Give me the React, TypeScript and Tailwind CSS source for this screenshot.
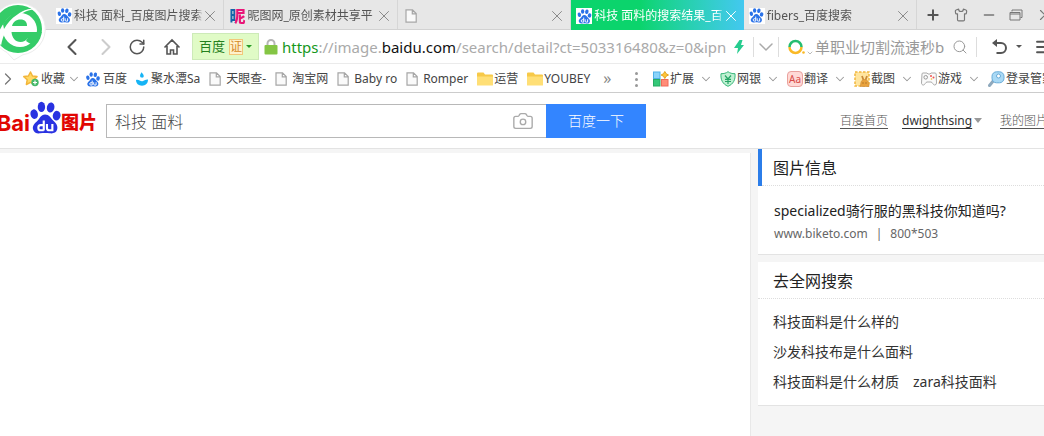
import { Camera, ChevronDown, ChevronLeft, ChevronRight, Menu, Minus, Plus, RotateCw, Search, Shirt, X } from "lucide-react"
import { FunctionComponent, ReactNode } from "react"

const Paw: FunctionComponent<{ className?: string; hole?: string }> = ({ className, hole = "#fff" }) => (
  <svg viewBox="0 0 32 34" className={className} aria-hidden="true">
    <g fill="currentColor">
      <ellipse cx="4.3" cy="13" rx="3.8" ry="5" transform="rotate(-12 4.3 13)" />
      <ellipse cx="11.8" cy="5.6" rx="3.8" ry="5.3" />
      <ellipse cx="21.3" cy="6.2" rx="3.9" ry="5.2" transform="rotate(12 21.3 6.2)" />
      <ellipse cx="27.5" cy="14.6" rx="4" ry="5" transform="rotate(10 27.5 14.6)" />
      <path d="M15.5 13.5c4.5 0 5.8 3.6 8.4 6.2 3 2.9 5.1 5.3 4.2 9-.9 3.6-4.3 4.6-7.6 4.1-3.3-.5-6.7-.5-10 0-3.5.5-6.6-.8-7.4-4.2-.8-3.6 1.6-5.8 4.4-8.4 2.7-2.5 3.6-6.7 8-6.7Z" />
    </g>
    <g fill="none" stroke={hole} strokeWidth="2.2">
      <path d="M14.2 19.5v10.3M14.2 24.3h-3.2c-1.7 0-2.4 1-2.4 2.7s.7 2.7 2.4 2.7h3.2M17.5 23.3v4c0 1.7.8 2.4 2.4 2.4h3.2v-6.4" />
    </g>
  </svg>
)

const BrowserLogo = () => (
  <svg viewBox="0 0 46 62" className="h-[62px] w-[46px]" aria-hidden="true">
    <path d="M18 3a26 26 0 0 1 5 51.7L14 60l-7-7.5A26 26 0 0 1 18 3Z" fill="#fff" stroke="#ececec" />
    <circle cx="18" cy="29" r="24" fill="#34cc68" />
    <circle cx="20" cy="30" r="17" fill="#fff" />
    <path d="M12 26c1-4 4-6.5 8.5-6.5S27 22 27 26Z" fill="#34cc68" />
    <path d="M11.5 32H42l-4.5 6H28c-2 2.500-4.500 4-7.500 4-5 0-8.500-4-9-10Z" fill="#34cc68" />
    <path d="M28 37.500h10l-3 6C32 45 30 44 26 41Z" fill="#34cc68" />
    <path d="M37 9C22 9 5 23 1 46c-2-4-3-8-3-12C3 20 18 7 37 9Z" fill="#fff" />
    <path d="M3 24C10 13 20 7 31 8c-10 3-20 9-27 21Z" fill="#34cc68" />
  </svg>
)

const FileIcon: FunctionComponent<{ className?: string }> = ({ className = "h-[14px] w-3" }) => (
  <svg viewBox="0 0 12 14" className={`shrink-0 ${className}`} aria-hidden="true">
    <path d="M1 .8h6.5L11.2 4.5v8.7H1ZM7.3.8v4h3.9" fill="#fafafa" stroke="#a6a6a6" strokeWidth="1.2" />
  </svg>
)

const FolderIcon = () => (
  <svg viewBox="0 0 16 14" className="h-[14px] w-4 shrink-0" aria-hidden="true">
    <path d="M0 1.5Q0 .5 1 .5h5.5L8 2.5h7q1 0 1 1V13H0Z" fill="#f7c948" />
    <path d="M0 4.5h16V13q0 .5-.5.5h-15Q0 13.5 0 13Z" fill="#ffdf76" />
  </svg>
)

const StarIcon = () => (
  <svg viewBox="0 0 16 16" className="size-4 shrink-0" aria-hidden="true">
    <path d="m7.5 1 2 4 4.5.6-3.2 3.2.8 4.7-4.1-2.1-4.1 2.1.8-4.7L.8 5.6 5.4 5Z" fill="#ffd965" stroke="#f3b63a" strokeWidth="1.5" strokeLinejoin="round" />
    <circle cx="12" cy="11.5" r="3.7" fill="#46b96b" />
    <path d="M12 9.5v4M10 11.5h4" stroke="#fff" strokeWidth="1.2" />
  </svg>
)

const DropIcon = () => (
  <svg viewBox="0 0 12 14" className="h-[14px] w-3 shrink-0" aria-hidden="true">
    <path d="M0 8c3-1 4.5 2 7 1 2-.8 3-2 5-1.5 0 4-2.5 6.2-6 6.2S0 11.5 0 8Z" fill="#16b4f5" />
    <path d="M5.5.3C7 2 8 3 7.700 4.500c-.4 1.600-3 1.600-3.500 0C3.800 3 4.500 2 5.500.3Z" fill="#16b4f5" />
  </svg>
)

const ExtensionIcon = () => (
  <svg viewBox="0 0 16 16" className="size-4 shrink-0" aria-hidden="true">
    <rect x=".5" y="1" width="6.5" height="6.5" fill="#8ad3fa" stroke="#4fb0e8" />
    <rect x=".5" y="8.5" width="6.5" height="6.5" fill="#35c878" stroke="#27ab63" />
    <rect x="8.5" y="8.5" width="6.5" height="6.5" fill="#ff8c78" stroke="#ee6b58" />
    <path d="m11.8.5 1.3 2.2 2.4 1.3-2.4 1.3-1.3 2.2-1.3-2.2L8.1 4l2.4-1.3Z" fill="#ffc53a" stroke="#e3a21d" />
  </svg>
)

const BankIcon = () => (
  <svg viewBox="0 0 16 16" className="size-4 shrink-0" aria-hidden="true">
    <path d="M8 .7c2 1.5 4 2 7 2 .5 6-1.5 10.3-7 12.6C2.500 13 .5 8.700 1 2.700c3 0 5-.5 7-2Z" fill="#bff0d2" stroke="#35b678" />
    <path d="m5 4.500 3 3.500 3-3.500M8 8v5M5 8.300h6M5 10.500h6" fill="none" stroke="#25a565" strokeWidth="1.2" />
  </svg>
)

const TranslateIcon = () => (
  <span className="flex size-4 shrink-0 items-center justify-center rounded-sm border border-[#e9a19e] bg-[#ffd9d6] text-[10px] leading-none text-[#d84b48]">
    Aa
  </span>
)

const ScreenshotIcon = () => (
  <svg viewBox="0 0 16 16" className="size-4 shrink-0" aria-hidden="true">
    <rect x="1" y="1" width="14" height="14" fill="#ffe59f" stroke="#f1b63f" strokeWidth="1.5" strokeDasharray="2.5 1.5" />
    <path d="M8 5l1.5 4M13 5l-1.5 4" stroke="#c98a3a" strokeWidth="1.8" />
    <path d="M6.5 15.500c0-4.500 1-7 4-7s4.500 2.500 4.500 7Z" fill="#e9a23c" stroke="#c98a3a" strokeWidth=".6" />
    <path d="M9 11.500v1M12 11.500v1" stroke="#84501a" />
  </svg>
)

const GameIcon = () => (
  <svg viewBox="0 0 16 16" className="size-4 shrink-0" aria-hidden="true">
    <path d="M2 2h4l1 1h2l1-1h4q1 0 1.200 1L15.500 12q0 2-2 2c-1.500 0-2-3-3.500-3H6c-1.500 0-2 3-3.500 3s-2-1-2-2L1 3q0-1 1-1Z" fill="#fafafa" stroke="#aaa" />
    <circle cx="4.7" cy="6.3" r="1.8" fill="none" stroke="#999" />
    <circle cx="10" cy="5" r="1" fill="#ef5350" />
    <circle cx="12.5" cy="6.5" r="1" fill="#ef5350" />
    <circle cx="10.5" cy="8" r=".8" fill="#f7b531" />
  </svg>
)

const KeyIcon = () => (
  <svg viewBox="0 0 17 16" className="h-4 w-[17px] shrink-0" aria-hidden="true">
    <path d="m6 9-4.5 5.5" stroke="#8fa9bd" strokeWidth="3" strokeLinecap="round" />
    <rect x="4" y=".8" width="12" height="11" rx="4.5" fill="#a9d9f5" stroke="#68abd8" />
    <circle cx="10.5" cy="5" r="2" fill="#fff" stroke="#68abd8" />
  </svg>
)

const PawBox = () => (
  <span className="flex size-4 shrink-0 items-center justify-center bg-white">
    <Paw className="size-[15px] text-[#2a72e8]" />
  </span>
)

const tabs: { title: string; icon: ReactNode; active?: boolean }[] = [
  { title: "科技 面料_百度图片搜索", icon: <PawBox /> },
  {
    title: "昵图网_原创素材共享平",
    icon: (
      <span className="w-4 shrink-0 bg-linear-to-r from-[#1465a8] from-35% to-[#e91578] to-35% bg-clip-text text-base leading-4 font-black text-transparent">
        昵
      </span>
    ),
  },
  { title: "", icon: <FileIcon className="ml-0.5 h-[14px] w-3" /> },
  { title: "科技 面料的搜索结果_百", icon: <PawBox />, active: true },
  { title: "fibers_百度搜索", icon: <PawBox /> },
]

const bookmarks: { label: string; icon: ReactNode; gap: string }[] = [
  { label: "百度", icon: <Paw className="h-[15px] w-[14px] shrink-0 text-[#2a72e8]" />, gap: "gap-[3px]" },
  { label: "聚水潭Sa", icon: <DropIcon />, gap: "gap-[3px]" },
  { label: "天眼查-", icon: <FileIcon />, gap: "gap-[5px]" },
  { label: "淘宝网", icon: <FileIcon />, gap: "gap-[5px]" },
  { label: "Baby ro", icon: <FileIcon />, gap: "gap-[5px]" },
  { label: "Romper", icon: <FileIcon />, gap: "gap-[5px]" },
  { label: "运营", icon: <FolderIcon />, gap: "gap-px" },
  { label: "YOUBEY", icon: <FolderIcon />, gap: "gap-px" },
]

const tools = [
  { label: "扩展", icon: <ExtensionIcon /> },
  { label: "网银", icon: <BankIcon /> },
  { label: "翻译", icon: <TranslateIcon /> },
  { label: "截图", icon: <ScreenshotIcon /> },
  { label: "游戏", icon: <GameIcon /> },
  { label: "登录管家", icon: <KeyIcon /> },
]

const TabBar = () => (
  <div className="flex h-[30px] border-b border-[#d2d2d2] bg-[#e7e7e7] pl-[51px] text-xs text-[#555]">
    {tabs.map((tab, i) => (
      <div
        key={i}
        className={`flex min-w-0 flex-1 items-center gap-0.5 pt-0.5 pr-1 pl-[5px] ${
          tab.active
            ? "-mb-px bg-linear-to-r from-[#0bd46c] from-40% to-[#43c8f0] text-white"
            : "border-r border-[#d6d6d6]"
        }`}
      >
        {tab.icon}
        <span className="min-w-0 flex-1 overflow-hidden mask-r-from-95% whitespace-nowrap">{tab.title}</span>
        <button aria-label="关闭标签" className="-ml-1">
          <X className={`size-[18px] ${tab.active ? "text-white" : "text-[#888]"}`} strokeWidth={1.3} />
        </button>
      </div>
    ))}
    <div className="flex w-[127px] shrink-0 items-center justify-between overflow-hidden pl-2 text-[#777]">
      <button aria-label="新标签"><Plus className="size-4 text-[#555]" strokeWidth={3} /></button>
      <button aria-label="皮肤"><Shirt className="size-[14px]" /></button>
      <button aria-label="最小化"><Minus className="size-4" strokeWidth={2} /></button>
      <button aria-label="还原">
        <svg viewBox="0 0 14 12" className="h-3 w-[14px]">
          <path d="M3 2.5V1h10v7.5h-1.5M1 3.5h10V11H1ZM1 5h10" fill="none" stroke="currentColor" />
        </svg>
      </button>
      <button aria-label="关闭" className="-mr-2.5"><X className="size-[18px]" strokeWidth={1.5} /></button>
    </div>
  </div>
)

const AddressBar = () => (
  <div className="flex h-[34px] items-center border-b border-[#ebebeb] pl-[58px] text-[#555]">
    <button aria-label="后退"><ChevronLeft className="size-7" strokeWidth={1.8} /></button>
    <button aria-label="前进" className="ml-1.5"><ChevronRight className="size-7 text-[#ccc]" strokeWidth={1.8} /></button>
    <button aria-label="刷新" className="ml-2"><RotateCw className="size-[18px]" strokeWidth={2} /></button>
    <button aria-label="主页" className="ml-[17px]">
      <svg viewBox="0 0 18 18" className="size-[18px]">
        <path d="M1.5 9.5 9 2l7.5 7.5M4 8v8h3.500v-4h3v4H14V8" fill="none" stroke="currentColor" strokeWidth="1.6" />
      </svg>
    </button>
    <button className="ml-[11px] flex h-[27px] w-[67px] shrink-0 items-center justify-center border border-[#cdeab8] bg-[#e0fbc6] text-[13px] text-[#25801d]">
      百度
      <span className="ml-1 border border-[#f2c879] bg-[#fff2cc] text-xs leading-[14px] text-[#d58a28]">证</span>
      <span className="ml-[3px] border-x-3 border-t-3 border-x-transparent border-t-[#259a25]" />
    </button>
    <svg viewBox="0 0 14 16" className="ml-[5px] h-4 w-[14px] shrink-0" aria-hidden="true">
      <path d="M3.5 7V4.500a3.500 3.500 0 0 1 7 0V7" fill="none" stroke="#b5b5b5" strokeWidth="2" />
      <rect x=".5" y="6" width="13" height="9.5" rx="1" fill="#84c544" />
    </svg>
    <div
      role="textbox"
      aria-label="地址"
      contentEditable
      suppressContentEditableWarning
      className="ml-1 min-w-0 flex-1 overflow-hidden pt-0.5 text-[15px] whitespace-nowrap text-[#aaa]"
    >
      <span className="text-[#16981b]">https</span>://image.<span className="text-[#111]">baidu.com</span>
      /search/detail?ct=503316480&amp;z=0&amp;ipn
    </div>
    <svg viewBox="0 0 10 14" className="mr-[9px] h-[14px] w-2.5 shrink-0" aria-hidden="true">
      <path d="M5.5 0h3L7 5h3L3 14l1-6H0Z" fill="#27cc8f" />
    </svg>
    <span className="h-5 w-px bg-[#ddd]" />
    <button aria-label="历史地址" className="flex w-6 justify-center"><ChevronDown className="size-6 text-[#aaa]" strokeWidth={1.5} /></button>
    <span className="h-5 w-px bg-[#ddd]" />
    <svg viewBox="0 0 18 16" className="ml-[9px] h-4 w-[18px] shrink-0" aria-hidden="true">
      <path d="M1.5 8a6 6 0 0 1 12 0" fill="none" stroke="#25bd70" strokeWidth="2.5" />
      <path d="M1.5 8a6 6 0 0 0 12 0" fill="none" stroke="#fab926" strokeWidth="2.5" />
      <circle cx="15.5" cy="13.5" r="1.3" fill="#fab926" />
    </svg>
    <ChevronDown className="mt-3 size-2 shrink-0 text-[#999]" />
    <input
      aria-label="搜索"
      placeholder="单职业切割流速秒bo"
      className="ml-px w-[129px] pt-0.5 text-[15px] outline-none placeholder:text-[#999]"
    />
    <button aria-label="搜索" className="ml-2"><Search className="size-4 text-[#999]" strokeWidth={1.5} /></button>
    <span className="ml-2 h-5 w-px bg-[#ddd]" />
    <button aria-label="恢复" className="ml-[15px] flex items-center gap-[9px]">
      <svg viewBox="0 0 15 16" className="h-4 w-[15px]">
        <path d="M2 4h7a4.8 4.8 0 0 1 0 10H4.5" fill="none" stroke="currentColor" strokeWidth="2" />
        <path d="M0 4 5 0v8Z" fill="currentColor" />
      </svg>
      <span className="border-x-3 border-t-3 border-x-transparent border-t-[#555]" />
    </button>
    <button aria-label="菜单" className="-mr-2 ml-3"><Menu className="size-[18px]" strokeWidth={2.5} /></button>
  </div>
)

const BookmarkBar = () => (
  <div className="flex h-[29px] items-center overflow-hidden border-b border-[#ccc] pt-0.5 text-xs whitespace-nowrap text-[#444]">
    <button aria-label="侧边栏" className="-ml-1 flex w-[27px] shrink-0 items-center">
      <span className="h-3 w-0.5 bg-[#999]" />
      <ChevronRight className="size-5 text-[#777]" strokeWidth={1.5} />
    </button>
    <button className="flex shrink-0 items-center gap-0.5">
      <StarIcon />
      收藏
      <ChevronDown className="mr-[5px] size-[14px] text-[#999]" strokeWidth={1.8} />
    </button>
    <div className="flex min-w-0 flex-1 items-center gap-[9px] overflow-hidden">
      {bookmarks.map((bookmark) => (
        <a key={bookmark.label} href="#" className={`flex shrink-0 items-center ${bookmark.gap}`}>
          {bookmark.icon}
          {bookmark.label}
        </a>
      ))}
      <button aria-label="更多书签" className="ml-1 pb-0.5 text-base leading-5 text-[#888]">»</button>
    </div>
    <span className="mr-[15px] flex flex-col gap-[3px]" aria-hidden="true">
      <i className="size-[3px] rounded-full bg-[#999]" />
      <i className="size-[3px] rounded-full bg-[#999]" />
      <i className="size-[3px] rounded-full bg-[#999]" />
    </span>
    <div className="flex w-[391px] shrink-0">
      {tools.map((tool) => (
        <button key={tool.label} className="flex w-[67px] shrink-0 items-center gap-px">
          {tool.icon}
          {tool.label}
          <ChevronDown className="ml-1 size-[14px] shrink-0 text-[#999]" strokeWidth={1.8} />
        </button>
      ))}
    </div>
  </div>
)

const SearchHeader = () => (
  <header className="flex h-14 items-center overflow-hidden border-b border-[#e3e3e3] bg-white">
    <a href="#" aria-label="百度图片" className="flex w-[97px] shrink-0 justify-end text-[#e10602]">
      <span className="mt-[5px] font-['Inter','Noto_Sans'] text-[22px] leading-8 font-bold">Bai</span>
      <Paw className="-mt-px h-[34px] w-[31px] shrink-0 text-[#2932e1]" />
      <span className="mt-1 shrink-0 text-lg leading-8 font-black">图片</span>
    </a>
    <form className="ml-[9px] flex h-[34px] w-[540px] shrink-0">
      <div className="flex flex-1 items-center border border-r-0 border-[#b8b8b8] pr-3 pl-2">
        <input aria-label="搜索词" defaultValue="科技 面料" className="min-w-0 flex-1 pt-0.5 text-base font-light text-[#444] outline-none" />
        <button type="button" aria-label="按图片搜索"><Camera className="size-[22px] text-[#aaa]" strokeWidth={1.5} /></button>
      </div>
      <button type="button" className="w-[100px] bg-[#3385ff] text-sm font-light text-white">百度一下</button>
    </form>
    <nav className="ml-auto flex w-[204px] shrink-0 items-center text-xs whitespace-nowrap text-[#555] underline underline-offset-3">
      <a href="#" className="font-light">百度首页</a>
      <a href="#" className="ml-[14px] text-[#333]">dwighthsing</a>
      <span className="ml-0.5 border-x-4 border-t-5 border-x-transparent border-t-[#999]" />
      <a href="#" className="ml-[18px] font-light">我的图片</a>
    </nav>
  </header>
)

const Card: FunctionComponent<{ title: string; accent?: boolean; children: ReactNode }> = ({ title, accent, children }) => (
  <section className="border-b border-[#e3e3e3] bg-white">
    <div className="flex">
      {accent && <span className="w-1 bg-[#2b7de9]" />}
      <h2
        className={`flex h-[37px] flex-1 items-center border-b border-dotted border-[#ddd] pt-0.5 text-base text-[#222] ${
          accent ? "pl-[11px]" : "pl-[15px]"
        }`}
      >
        {title}
      </h2>
    </div>
    {children}
  </section>
)

export default function App() {
  return (
    <div className="flex min-h-screen flex-col overflow-hidden bg-white font-['Noto_Sans','Noto_Sans_CJK_SC',sans-serif]">
      <div className="relative">
        <TabBar />
        <AddressBar />
        <BookmarkBar />
        <div className="absolute top-0 left-0">
          <BrowserLogo />
        </div>
      </div>
      <SearchHeader />
      <main className="flex flex-1 gap-[7px] bg-[#f5f5f5]">
        <div className="mt-1 flex-1 border-r border-[#e8e8e8] bg-white" />
        <aside className="flex w-[286px] shrink-0 flex-col gap-[7px]">
          <Card title="图片信息" accent>
            <div className="px-4 pt-[14px] pb-2">
              <a href="#" className="block text-sm leading-[22px] whitespace-nowrap text-[#222]">specialized骑行服的黑科技你知道吗?</a>
              <p className="text-xs leading-6 text-[#666]">
                <a href="#">www.biketo.com</a>
                <span className="mx-2">|</span>
                800*503
              </p>
            </div>
          </Card>
          <Card title="去全网搜索">
            <div className="flex flex-wrap gap-x-[14px] px-[15px] py-2 text-sm leading-[30px] text-[#333]">
              <a href="#" className="w-full">科技面料是什么样的</a>
              <a href="#" className="w-full">沙发科技布是什么面料</a>
              <a href="#">科技面料是什么材质</a>
              <a href="#">zara科技面料</a>
            </div>
          </Card>
        </aside>
      </main>
    </div>
  )
}
